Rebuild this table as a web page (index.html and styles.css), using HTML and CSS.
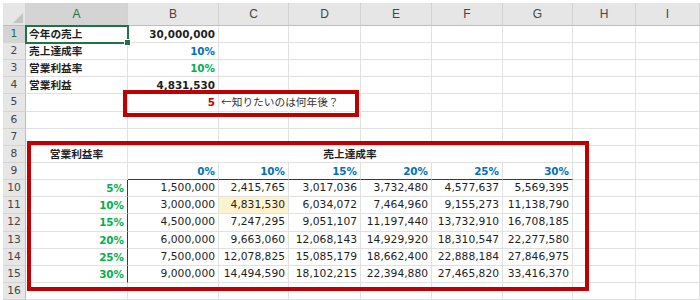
FILE: index.html
```html
<!DOCTYPE html>
<html lang="ja">
<head>
<meta charset="utf-8">
<title>Sheet</title>
<link rel="stylesheet" href="styles.css">
</head>
<body>
<div class="sheet">
  <div class="h corner"></div><div class="h sel">A</div><div class="h">B</div><div class="h">C</div><div class="h">D</div><div class="h">E</div><div class="h">F</div><div class="h">G</div><div class="h">H</div><div class="h">I</div>

  <div class="rh sel">1</div><div class="c jp b">今年の売上</div><div class="c r nb">30,000,000</div><div class="c"></div><div class="c"></div><div class="c"></div><div class="c"></div><div class="c"></div><div class="c"></div><div class="c"></div>
  <div class="rh">2</div><div class="c jp b">売上達成率</div><div class="c r nb blue">10%</div><div class="c"></div><div class="c"></div><div class="c"></div><div class="c"></div><div class="c"></div><div class="c"></div><div class="c"></div>
  <div class="rh">3</div><div class="c jp b">営業利益率</div><div class="c r nb green">10%</div><div class="c"></div><div class="c"></div><div class="c"></div><div class="c"></div><div class="c"></div><div class="c"></div><div class="c"></div>
  <div class="rh">4</div><div class="c jp b">営業利益</div><div class="c r nb">4,831,530</div><div class="c"></div><div class="c"></div><div class="c"></div><div class="c"></div><div class="c"></div><div class="c"></div><div class="c"></div>
  <div class="rh">5</div><div class="c"></div><div class="c r nb red">5</div><div class="c jp note">←知りたいのは何年後？</div><div class="c"></div><div class="c"></div><div class="c"></div><div class="c"></div><div class="c"></div><div class="c"></div>
  <div class="rh">6</div><div class="c"></div><div class="c"></div><div class="c"></div><div class="c"></div><div class="c"></div><div class="c"></div><div class="c"></div><div class="c"></div><div class="c"></div>
  <div class="rh">7</div><div class="c"></div><div class="c"></div><div class="c"></div><div class="c"></div><div class="c"></div><div class="c"></div><div class="c"></div><div class="c"></div><div class="c"></div>
  <div class="rh">8</div><div class="c jp b ctr">営業利益率</div><div class="c jp b ctr merged">売上達成率</div><div class="c"></div><div class="c"></div>
  <div class="rh">9</div><div class="c"></div><div class="c r nb blue bb">0%</div><div class="c r nb blue bb">10%</div><div class="c r nb blue bb">15%</div><div class="c r nb blue bb">20%</div><div class="c r nb blue bb">25%</div><div class="c r nb blue bb">30%</div><div class="c"></div><div class="c"></div>
  <div class="rh">10</div><div class="c r nb green br">5%</div><div class="c r">1,500,000</div><div class="c r">2,415,765</div><div class="c r">3,017,036</div><div class="c r">3,732,480</div><div class="c r">4,577,637</div><div class="c r">5,569,395</div><div class="c"></div><div class="c"></div>
  <div class="rh">11</div><div class="c r nb green br">10%</div><div class="c r">3,000,000</div><div class="c r hl">4,831,530</div><div class="c r">6,034,072</div><div class="c r">7,464,960</div><div class="c r">9,155,273</div><div class="c r">11,138,790</div><div class="c"></div><div class="c"></div>
  <div class="rh">12</div><div class="c r nb green br">15%</div><div class="c r">4,500,000</div><div class="c r">7,247,295</div><div class="c r">9,051,107</div><div class="c r">11,197,440</div><div class="c r">13,732,910</div><div class="c r">16,708,185</div><div class="c"></div><div class="c"></div>
  <div class="rh">13</div><div class="c r nb green br">20%</div><div class="c r">6,000,000</div><div class="c r">9,663,060</div><div class="c r">12,068,143</div><div class="c r">14,929,920</div><div class="c r">18,310,547</div><div class="c r">22,277,580</div><div class="c"></div><div class="c"></div>
  <div class="rh">14</div><div class="c r nb green br">25%</div><div class="c r">7,500,000</div><div class="c r">12,078,825</div><div class="c r">15,085,179</div><div class="c r">18,662,400</div><div class="c r">22,888,184</div><div class="c r">27,846,975</div><div class="c"></div><div class="c"></div>
  <div class="rh">15</div><div class="c r nb green br">30%</div><div class="c r">9,000,000</div><div class="c r">14,494,590</div><div class="c r">18,102,215</div><div class="c r">22,394,880</div><div class="c r">27,465,820</div><div class="c r">33,416,370</div><div class="c"></div><div class="c"></div>
  <div class="rh">16</div><div class="c"></div><div class="c"></div><div class="c"></div><div class="c"></div><div class="c"></div><div class="c"></div><div class="c"></div><div class="c"></div><div class="c"></div>

  <div class="selection"><span class="handle"></span></div>
  <div class="redbox box-year"></div>
  <div class="redbox box-table"></div>
</div>
</body>
</html>
```

FILE: styles.css
```css
html, body {
  margin: 0;
  padding: 0;
  background: #ffffff;
  overflow: hidden;
}

.sheet {
  position: relative;
  display: grid;
  grid-template-columns: 23px 102px 91px 70px 72px 71px 71px 70px 63px 64px;
  grid-template-rows: 23px 17px 17px 17px 17px 18px 17px 17px 17px 17px 17px 17px 18px 17px 17px 17px 17px;
  padding: 3px 0 0 3px;
  width: 700px;
  height: 300px;
  box-sizing: border-box;
}

.h, .rh {
  box-sizing: border-box;
  background: #e6e6e6;
  color: #444444;
  text-align: center;
  font-family: "Liberation Sans", Arial, sans-serif;
  font-size: 12px;
}

.h {
  border-right: 1px solid #d2d2d2;
  border-bottom: 1px solid #bdbdbd;
  line-height: 22px;
}

.rh {
  border-right: 1px solid #bdbdbd;
  border-bottom: 1px solid #d4d4d4;
  line-height: 16px;
  font-family: "DejaVu Sans", sans-serif;
  font-size: 10.7px;
}

.sel {
  background: #d4d4d4;
  color: #217346;
}

.corner {
  position: relative;
}

.corner::after {
  content: "";
  position: absolute;
  right: 2px;
  bottom: 2px;
  width: 0;
  height: 0;
  border-left: 10px solid transparent;
  border-bottom: 10px solid #c4c4c4;
}

.c {
  box-sizing: border-box;
  border-right: 1px solid #e1e1e1;
  border-bottom: 1px solid #e1e1e1;
  padding: 0 3px;
  line-height: 16px;
  font-family: "DejaVu Sans", "Noto Sans CJK JP", sans-serif;
  font-size: 10.7px;
  color: #1e1e1e;
  white-space: nowrap;
  overflow: hidden;
}

.jp {
  font-family: "Noto Sans CJK JP", sans-serif;
  font-size: 10.7px;
}

.b {
  font-weight: bold;
}

.nb {
  font-weight: bold;
  font-size: 10.4px;
}

.r {
  text-align: right;
}

.ctr {
  text-align: center;
}

.merged {
  grid-column: span 6;
}

.blue {
  color: #0070c0;
}

.green {
  color: #00b050;
}

.red {
  color: #c00000;
}

.note {
  overflow: visible;
  border-right-color: transparent;
  color: #333333;
  padding-left: 2px;
  position: relative;
  z-index: 1;
}

.hl {
  background: #fff2cc;
}

.bb {
  border-bottom: 1px solid #3a3a3a;
}

.br {
  border-right: 1px solid #3a3a3a;
}

.selection {
  position: absolute;
  left: 25px;
  top: 25px;
  width: 104px;
  height: 19px;
  border: 2px solid #217346;
  box-sizing: border-box;
}

.handle {
  position: absolute;
  right: -4px;
  bottom: -4px;
  width: 5px;
  height: 5px;
  background: #217346;
  border: 1px solid #ffffff;
}

.redbox {
  position: absolute;
  border: 4px solid #c00000;
  box-sizing: border-box;
  z-index: 2;
}

.box-year {
  left: 123px;
  top: 90px;
  width: 236px;
  height: 27px;
}

.box-table {
  left: 27px;
  top: 141px;
  width: 562px;
  height: 150px;
}
```
